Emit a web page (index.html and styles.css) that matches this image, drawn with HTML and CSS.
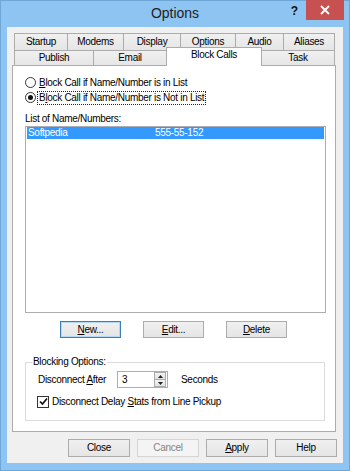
FILE: index.html
```html
<!DOCTYPE html>
<html>
<head>
<meta charset="utf-8">
<link rel="stylesheet" href="styles.css">
</head>
<body>
<div class="window">
  <div class="titlebar">
    <div class="title">Options</div>
    <div class="help">?</div>
    <div class="close"><svg width="10" height="10" viewBox="0 0 10 10"><path d="M1 1 L9 9 M9 1 L1 9" stroke="#fff" stroke-width="1.8"/></svg></div>
  </div>
  <div class="client">
    <div class="tabs">
      <div class="tabrow row1">
        <div class="tab">Startup</div>
        <div class="tab">Modems</div>
        <div class="tab">Display</div>
        <div class="tab">Options</div>
        <div class="tab">Audio</div>
        <div class="tab">Aliases</div>
      </div>
      <div class="tabrow row2">
        <div class="tab">Publish</div>
        <div class="tab">Email</div>
        <div class="tab selected">Block Calls</div>
        <div class="tab">Task</div>
      </div>
    </div>
    <div class="panel">
      <div class="radio-row">
        <span class="radio"></span>
        <span class="label"><u>B</u>lock Call if Name/Number is in List</span>
      </div>
      <div class="radio-row">
        <span class="radio checked"></span>
        <span class="label focus">B<u>l</u>ock Call if Name/Number is Not in List</span>
      </div>
      <div class="list-label">List of Name/Numbers:</div>
      <div class="listbox">
        <div class="list-item sel"><span class="name">Softpedia</span><span class="num">555-55-152</span></div>
      </div>
      <div class="list-buttons">
        <button class="btn default"><u>N</u>ew...</button>
        <button class="btn"><u>E</u>dit...</button>
        <button class="btn"><u>D</u>elete</button>
      </div>
      <fieldset class="group">
        <legend>Blocking Options:</legend>
        <div class="spin-row">
          <span class="spin-label">Disconnect <u>A</u>fter</span>
          <div class="spin">
            <span class="spin-value">3</span>
            <div class="spin-btns">
              <span class="spin-btn"><svg width="5" height="3" viewBox="0 0 5 3"><path d="M2.5 0 L5 3 L0 3 Z" fill="#222"/></svg></span>
              <span class="spin-btn"><svg width="5" height="3" viewBox="0 0 5 3"><path d="M0 0 L5 0 L2.5 3 Z" fill="#222"/></svg></span>
            </div>
          </div>
          <span class="spin-unit">Seconds</span>
        </div>
        <div class="check-row">
          <span class="checkbox"><svg width="9" height="9" viewBox="0 0 9 9"><path d="M1 4.5 L3.5 7 L8 1.5" stroke="#111" stroke-width="1.7" fill="none"/></svg></span>
          <span>Disconnect Delay <u>S</u>tats from Line Pickup</span>
        </div>
      </fieldset>
    </div>
    <div class="dialog-buttons">
      <button class="btn">Close</button>
      <button class="btn disabled">Cancel</button>
      <button class="btn"><u>A</u>pply</button>
      <button class="btn">Help</button>
    </div>
  </div>
</div>
</body>
</html>
```

FILE: styles.css
```css
* { box-sizing: border-box; }
html, body { margin: 0; padding: 0; }
body {
  width: 350px;
  height: 471px;
  overflow: hidden;
  font-family: "Liberation Sans", Arial, sans-serif;
  font-size: 10px;
  letter-spacing: -0.3px;
  color: #000;
}
.window {
  width: 350px;
  height: 471px;
  background: #8ec4f1;
  border: 1px solid #6fa6d8;
  display: flex;
  flex-direction: column;
}
.titlebar {
  height: 26px;
  display: flex;
  align-items: flex-start;
  position: relative;
}
.title {
  position: absolute;
  left: 0;
  right: 0;
  top: 4px;
  text-align: center;
  font-size: 14px;
  letter-spacing: 0;
  color: #222;
}
.help {
  margin-left: auto;
  margin-right: 8px;
  margin-top: 3px;
  font-weight: bold;
  font-size: 12px;
  letter-spacing: 0;
  color: #111;
}
.close {
  width: 38px;
  height: 20px;
  margin-top: -1px;
  margin-right: 5px;
  background: #c75050;
  display: flex;
  align-items: center;
  justify-content: center;
}
.client {
  margin: 0 6px 7px 6px;
  flex: 1;
  background: #f0f0f0;
  display: flex;
  flex-direction: column;
}
.tabs {
  margin: 6px 0 0 7px;
  display: flex;
  flex-direction: column;
}
.tabrow { display: grid; }
.row1 {
  grid-template-columns: 53px 56px 57px 55px 48px 52px;
  height: 17px;
}
.row2 {
  grid-template-columns: 79px 73px 96px 73px;
  height: 15px;
}
.tab {
  border: 1px solid #acacac;
  border-right: none;
  border-bottom: none;
  background: linear-gradient(#f0f0f0, #e5e5e5);
  text-align: center;
  line-height: 15px;
  white-space: nowrap;
}
.tabrow .tab:last-child { border-right: 1px solid #acacac; }
.row2 .tab { line-height: 14px; }
.tab.selected {
  background: #fff;
  border-right: 1px solid #acacac;
  margin-top: -3px;
  height: 19px;
  position: relative;
  z-index: 2;
  line-height: 14px;
}
.tab.selected + .tab { border-left: none; }
.panel {
  margin-left: 5px;
  width: 324px;
  height: 367px;
  background: #fff;
  border: 1px solid #acacac;
  padding: 9px 0 0 12px;
  display: flex;
  flex-direction: column;
}
.radio-row {
  display: flex;
  align-items: center;
  height: 15px;
}
.radio {
  width: 11px;
  height: 11px;
  border: 1px solid #333;
  border-radius: 50%;
  background: #fff;
  margin-right: 2px;
  display: flex;
  align-items: center;
  justify-content: center;
}
.radio.checked::after {
  content: "";
  width: 5px;
  height: 5px;
  border-radius: 50%;
  background: #111;
}
.label { padding: 0 1px; line-height: 12px; white-space: nowrap; }
.label.focus { outline: 1px dotted #222; }
.list-label { margin-top: 8px; line-height: 12px; }
.listbox {
  margin-top: 1px;
  width: 301px;
  height: 187px;
  border: 1px solid #abadb3;
  background: #fff;
  padding: 0 1px;
}
.list-item {
  height: 12px;
  display: flex;
  line-height: 12px;
  color: #fff;
  background: #3399ff;
  padding-left: 1px;
}
.list-item .name { width: 127px; }
.list-buttons {
  margin-top: 8px;
  margin-left: 35px;
  display: flex;
  gap: 22px;
}
.btn {
  width: 62px;
  height: 18px;
  padding: 0;
  margin: 0;
  border: 1px solid #acacac;
  background: linear-gradient(#f0f0f0, #e5e5e5);
  font-family: "Liberation Sans", Arial, sans-serif;
  font-size: 10px;
  letter-spacing: -0.3px;
  color: #000;
  line-height: 14px;
}
.list-buttons .btn { height: 17px; width: 61px; line-height: 13px; }
.btn.default { border-color: #3c7fb1; box-shadow: inset 0 0 0 1px #b4d7f5; }
.btn.disabled {
  color: #838383;
  border-color: #d5d5d5;
  background: #f4f4f4;
}
.group {
  margin: 18px 0 0 0;
  width: 300px;
  height: 65px;
  border: 1px solid #dcdcdc;
  padding: 0 0 0 12px;
  min-width: 0;
}
.group legend {
  padding: 0 1px;
  margin-left: -6px;
  line-height: 12px;
}
.spin-row {
  display: flex;
  align-items: center;
  margin-top: 3px;
  height: 17px;
  white-space: nowrap;
}
.spin-label { width: 79px; }
.spin {
  width: 51px;
  height: 17px;
  border: 1px solid #abadb3;
  background: #fff;
  display: flex;
  align-items: center;
  padding-left: 4px;
}
.spin-value { flex: 1; }
.spin-btns {
  display: flex;
  flex-direction: column;
  width: 12px;
  height: 15px;
  margin-right: 1px;
}
.spin-btn {
  flex: 1;
  border: 1px solid #acacac;
  background: linear-gradient(#f2f2f2, #e3e3e3);
  display: flex;
  align-items: center;
  justify-content: center;
}
.spin-btn + .spin-btn { border-top: none; }
.spin-unit { margin-left: 13px; }
.check-row {
  display: flex;
  align-items: center;
  margin-top: 7px;
  height: 13px;
  white-space: nowrap;
}
.checkbox {
  width: 12px;
  height: 12px;
  border: 1px solid #333;
  background: #fff;
  margin-right: 3px;
  margin-left: -1px;
  display: flex;
  align-items: center;
  justify-content: center;
}
.dialog-buttons {
  margin-top: 7px;
  margin-right: 6px;
  display: flex;
  justify-content: flex-end;
  gap: 7px;
}
u { text-decoration: underline; text-underline-offset: 1px; }
```
